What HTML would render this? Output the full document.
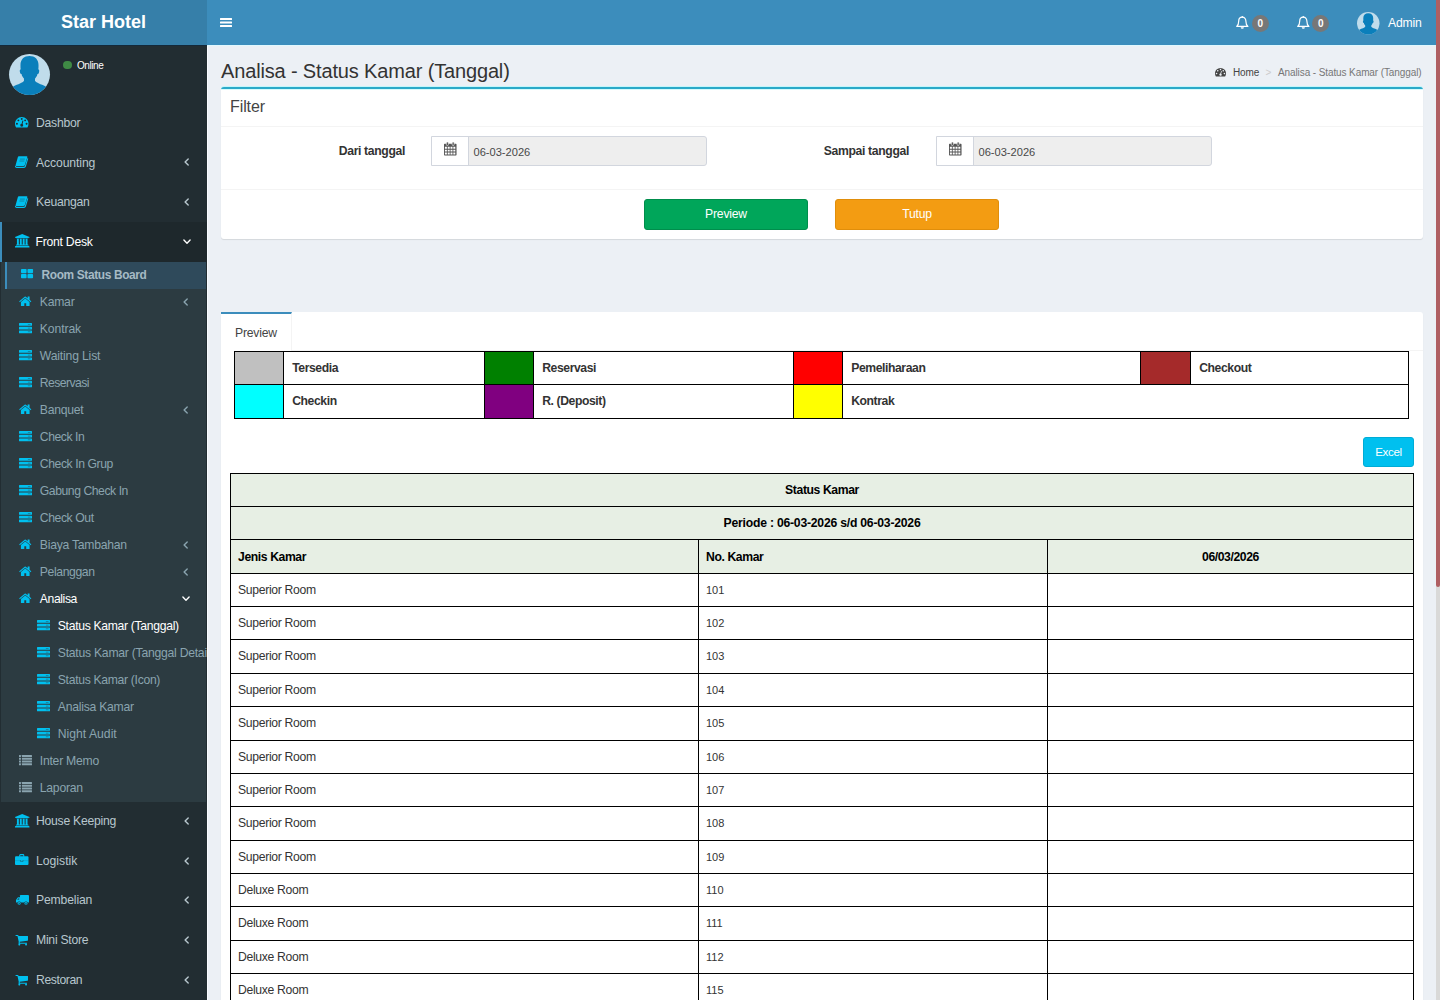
<!DOCTYPE html>
<html lang="id">
<head>
<meta charset="utf-8">
<title>Star Hotel - Analisa - Status Kamar (Tanggal)</title>
<style>
*{box-sizing:border-box}
html,body{margin:0;padding:0}
body{width:1440px;height:1000px;overflow:hidden;background:#ecf0f5;font-family:"Liberation Sans",sans-serif;font-size:11.7px;color:#333;position:relative;line-height:18px}
svg.i{position:absolute;display:block;overflow:visible}
/* ---------- header ---------- */
.hdr{position:absolute;left:0;top:0;width:1436px;height:45px;background:#3c8dbc}
.logo{position:absolute;left:0;top:0;width:207px;height:45px;background:#367fa9;color:#fff;text-align:center;font-weight:bold;font-size:18px;line-height:45px}
.badge{position:absolute;width:17px;height:17px;border-radius:50%;background:#777;color:#fff;font-weight:bold;font-size:10px;line-height:17px;text-align:center}
.admin{position:absolute;left:1388px;top:14px;color:#fff;font-size:12.200px;line-height:18px;letter-spacing:-.2px}
/* ---------- sidebar ---------- */
.side{position:absolute;left:0;top:45px;width:207px;height:955px;background:#222d32;overflow:hidden}
.online{position:absolute;left:63px;top:12.500px;color:#fff;font-size:10px;line-height:16px;white-space:nowrap;letter-spacing:-.4px}
.online b{display:inline-block;width:8.500px;height:8.500px;border-radius:50%;background:#3f8a45;margin-right:5.400px;vertical-align:-.5px}
.mi{position:absolute;left:0;width:207px;height:39.600px;color:#b8c7ce;border-left:3px solid transparent;font-size:12.200px;line-height:18px;white-space:nowrap;letter-spacing:-.25px}
.mi.act{background:#1e282c;color:#fff;border-left:2.500px solid #3c8dbc}
.mi.act .tx{left:33.500px}
.mi .tx{position:absolute;left:33px;top:10.450px}
.subbg{position:absolute;left:1px;width:205px;background:#2c3b41}
.si{position:absolute;left:0;width:207px;height:27px;color:#8aa4af;font-size:12.200px;line-height:18px;white-space:nowrap;letter-spacing:-.25px}
.si .tx{position:absolute;left:39.800px;top:3.700px}
.si.l2 .tx{left:57.800px}
.si.on{color:#fff}
.si.hov{left:4.700px;width:201.300px;background:#2f4a5b;border-left:2.500px solid #3c8dbc;font-weight:bold;color:#a6bac5;font-size:11.900px;letter-spacing:-.35px}
.si.hov .tx{left:34.800px}
/* ---------- content ---------- */
.main{position:absolute;left:207px;top:45px;width:1229px;height:955px;overflow:hidden}
h1.ttl{position:absolute;left:14px;top:13px;margin:0;font-weight:normal;font-size:20px;line-height:26px;color:#333;white-space:nowrap;letter-spacing:-.15px}
.crumb{position:absolute;top:19.500px;font-size:10px;line-height:16px;white-space:nowrap;letter-spacing:-.1px}
.crumb.home{color:#444}
.crumb.sep{color:#ccc}
.crumb.cur{color:#777}
.box{position:absolute;left:14px;width:1202px;background:#fff;border-radius:3px;box-shadow:0 1px 1px rgba(0,0,0,.1)}
.box1{top:42px;height:152px;border-top:2px solid #2aa9c8;box-shadow:0 1px 1px rgba(0,0,0,.1),0 -1px 0 #c4f6fb}
.box1:before{content:"";position:absolute;left:0;right:0;top:0;height:1px;background:#d6fbfd}
.box1 .bt{position:absolute;left:9px;top:7.500px;font-size:16px;line-height:20px;color:#444;letter-spacing:-.1px}
.box1 .l1{position:absolute;left:0;right:0;top:37px;height:1px;background:#f4f4f4}
.box1 .l2{position:absolute;left:0;right:0;top:100px;height:1px;background:#f4f4f4}
.lbl{position:absolute;top:53px;font-weight:bold;font-size:12.200px;line-height:18px;color:#333;text-align:right;white-space:nowrap;letter-spacing:-.35px}
.ig{position:absolute;top:47px;width:276px;height:30px;border:1px solid #d2d6de;background:#eee;border-radius:0 3px 3px 0}
.ig .ad{position:absolute;left:0;top:0;width:36.500px;height:28px;background:#fff;border-right:1px solid #d2d6de}
.ig .v{position:absolute;left:41.500px;top:6.600px;font-size:11.100px;line-height:16px;color:#484848}
.btn{position:absolute;height:31px;border-radius:3px;color:#fff;text-align:center;font-size:12.200px;line-height:29px;letter-spacing:-.2px}
.b-g{background:#00a65a;border:1px solid #008d4c}
.b-o{background:#f39c12;border:1px solid #e08e0b}
.b-c{background:#00c0ef;border:1px solid #00acd6}
.box2{top:267px;height:700px;border-radius:3px 3px 0 0}
.tabline{position:absolute;left:0;right:0;top:38px;height:1px;background:#f4f4f4}
.tab{position:absolute;background:#fff;left:0;top:0;width:71px;height:39px;border-top:2px solid #3c8dbc;border-right:1px solid #f4f4f4;color:#444;font-size:12.200px;line-height:18px;letter-spacing:-.2px}
.tab span{position:absolute;left:14px;top:10px}
table{border-collapse:collapse;table-layout:fixed}
.leg{position:absolute;left:13px;top:39px;width:1175px}
.leg td{border:1px solid #000;padding:0 0 0 8.200px;font-weight:bold;font-size:12.200px;color:#333;letter-spacing:-.42px}
.leg tr+tr td{padding-bottom:2px}
.dt{position:absolute;left:9px;top:161px;width:1184px}
.dt td,.dt th{border:1px solid #000;padding:0 0 1px 7px;font-size:12.200px;color:#333;text-align:left;font-weight:normal;letter-spacing:-.32px}
.dt .h td{background:#e7efe4;font-weight:bold;color:#000;letter-spacing:-.4px;font-size:12.200px}
.dt .h td.w{letter-spacing:-.22px}
.dt .c{text-align:center;padding:0 0 1px 0}
.dt .n{font-size:11px;letter-spacing:0}
.sb{position:absolute;right:0;top:0;width:4px;height:1000px;background:#d9d9d8}
.sb i{position:absolute;left:0;top:0;width:4px;height:587px;background:#af5f62;border-radius:0 0 2px 2px}
.dt tr.h3 td{padding-bottom:0}
.b-c{font-size:11.600px;letter-spacing:-.35px}
.halo1{position:absolute;left:207px;top:45px;width:1229px;height:1px;background:#e0f8fe}
.halo2{position:absolute;left:207px;top:46px;width:1px;height:954px;background:#f8fbff}
.halo3{position:absolute;left:0;top:45px;width:207px;height:1px;background:#14293a}

</style>
</head>
<body>
<div class="hdr">
  <div class="logo"><span>Star Hotel</span></div>
  <svg class="i" style="left:220px;top:17.500px" width="12" height="9" viewBox="0 0 12 9"><path fill="#fff" d="M.5 0h11q.5 0 .5 .5v1q0 .5-.5 .5H.5Q0 2 0 1.500v-1Q0 0 .5 0zm0 3.500h11q.5 0 .5 .5v1q0 .5-.5 .5H.5Q0 5.500 0 5V4q0-.5 .5-.5zm0 3.500h11q.5 0 .5 .5v1q0 .5-.5 .5H.5Q0 9 0 8.500v-1Q0 7 .5 7z"/></svg>
  <svg class="i" style="left:1236.20px;top:15.80px" width="12.60" height="13.00" viewBox="0 0 12.6 13"><path fill="none" stroke="#fff" stroke-width="1.2" stroke-linejoin="round" d="M6.3 1.2c-2.3 0-3.6 1.7-3.6 4 0 2.600-.7 4.100-2 5.200h11.200c-1.300-1.100-2-2.600-2-5.200 0-2.300-1.300-4-3.600-4z"/><path fill="#fff" d="M4.700 11.200h3.200q0 1.500-1.600 1.500t-1.600-1.500z"/><circle cx="6.300" cy=".9" r=".8" fill="#fff"/></svg>
  <div class="badge" style="left:1251.700px;top:14.800px">0</div>
  <svg class="i" style="left:1296.80px;top:15.80px" width="12.60" height="13.00" viewBox="0 0 12.6 13"><path fill="none" stroke="#fff" stroke-width="1.2" stroke-linejoin="round" d="M6.3 1.2c-2.3 0-3.6 1.7-3.6 4 0 2.600-.7 4.100-2 5.200h11.200c-1.300-1.100-2-2.600-2-5.200 0-2.300-1.300-4-3.600-4z"/><path fill="#fff" d="M4.700 11.200h3.200q0 1.500-1.600 1.500t-1.600-1.500z"/><circle cx="6.300" cy=".9" r=".8" fill="#fff"/></svg>
  <div class="badge" style="left:1312.200px;top:14.800px">0</div>
  <svg class="i" style="left:1356.6px;top:11.7px" width="22.5" height="22.5" viewBox="0 0 100 100"><defs><clipPath id="cp22"><circle cx="50" cy="50" r="50"/></clipPath></defs><circle cx="50" cy="50" r="50" fill="#c0dceb"/><g clip-path="url(#cp22)" fill="#0a7fbb"><path d="M50 5c-13 0-22 8-22 22 0 4 0 8 .5 11-2 0-2.500 2-2 5s2 6 4 6c1.500 6 4 9 6 11v6c-3 4-14 8-26 13-4 2-8 6-8 10v15h95V89c0-4-4-8-8-10-12-5-23-9-26-13v-6c2-2 4.500-5 6-11 2 0 3.500-3 4-6s0-5-2-5c.5-3 .5-7 .5-11 0-14-9-22-22-22z"/></g></svg>
  <div class="admin">Admin</div>
</div>
<div class="side">
  <svg class="i" style="left:8.9px;top:8.9px" width="41" height="41" viewBox="0 0 100 100"><defs><clipPath id="cp41"><circle cx="50" cy="50" r="50"/></clipPath></defs><circle cx="50" cy="50" r="50" fill="#c0dceb"/><g clip-path="url(#cp41)" fill="#0a7fbb"><path d="M50 5c-13 0-22 8-22 22 0 4 0 8 .5 11-2 0-2.500 2-2 5s2 6 4 6c1.500 6 4 9 6 11v6c-3 4-14 8-26 13-4 2-8 6-8 10v15h95V89c0-4-4-8-8-10-12-5-23-9-26-13v-6c2-2 4.500-5 6-11 2 0 3.500-3 4-6s0-5-2-5c.5-3 .5-7 .5-11 0-14-9-22-22-22z"/></g></svg>
  <div class="online"><b></b>Online</div>
<div class="mi" style="top:58.5px"><span class="tx">Dashbor</span></div>
<svg class="i" style="left:15.25px;top:72.3px" width="13.5" height="10.6" viewBox="0 256 1792 1408" preserveAspectRatio="none"><path fill="#00c0ef" d="M384 1152q0-53-37.500-90.500t-90.500-37.500-90.500 37.500-37.500 90.500 37.500 90.500 90.500 37.500 90.500-37.500 37.500-90.500zm192-448q0-53-37.500-90.500t-90.500-37.500-90.500 37.500-37.500 90.500 37.500 90.500 90.500 37.500 90.500-37.500 37.500-90.500zm428 481l101-382q6-26-7.500-48.500t-38.500-29.500-48 6.500-30 39.500l-101 382q-60 5-107 43.500t-63 98.500q-20 77 20 146t117 89 146-20 89-117q16-60-6-117t-72-91zm660-33q0-53-37.500-90.500t-90.500-37.500-90.500 37.500-37.500 90.500 37.500 90.500 90.500 37.500 90.500-37.500 37.500-90.500zm-640-640q0-53-37.500-90.500t-90.500-37.500-90.500 37.500-37.500 90.500 37.500 90.500 90.500 37.500 90.500-37.500 37.500-90.500zm448 192q0-53-37.500-90.500t-90.500-37.500-90.500 37.500-37.500 90.500 37.500 90.500 90.500 37.500 90.500-37.500 37.500-90.500zm320 448q0 261-141 483-19 29-54 29h-1402q-35 0-54-29-141-221-141-483 0-182 71-348t191-286 286-191 348-71 348 71 286 191 191 286 71 348z"/></svg>
<div class="mi" style="top:98.1px"><span class="tx" style="letter-spacing:-0.1px">Accounting</span></div>
<svg class="i" style="left:14.85px;top:111.09px" width="13.50" height="12.21" viewBox="0 0 12.6 11.4"><path fill="#00c0ef" d="M3.6 0.2h7.2q1 0 .7 1L9.2 8.4q-.3 .9-1.3 .9H1.2q-.9 0-.6-1L2.7 1q.2-.8 .9-.8z"/><path fill="none" stroke="#00c0ef" stroke-width="1" d="M11.9 2.2L9.7 9.6q-.3 1-1.3 1H1.6q-1.3 0-1.1-1.3"/><path stroke="#222d32" stroke-opacity=".45" stroke-width=".8" d="M4.6 2.9h4.6M4.1 4.7h4.6"/></svg>
<svg class="i" style="left:183.70px;top:113.30px" width="5.50" height="8.00" viewBox="0 0 5.5 8"><path fill="none" stroke="#b8c7ce" stroke-width="1.4" stroke-linecap="round" stroke-linejoin="round" d="M4.2 .9L1.1 4l3.1 3.1"/></svg>
<div class="mi" style="top:137.7px"><span class="tx">Keuangan</span></div>
<svg class="i" style="left:14.85px;top:150.69px" width="13.50" height="12.21" viewBox="0 0 12.6 11.4"><path fill="#00c0ef" d="M3.6 0.2h7.2q1 0 .7 1L9.2 8.4q-.3 .9-1.3 .9H1.2q-.9 0-.6-1L2.7 1q.2-.8 .9-.8z"/><path fill="none" stroke="#00c0ef" stroke-width="1" d="M11.9 2.2L9.7 9.6q-.3 1-1.3 1H1.6q-1.3 0-1.1-1.3"/><path stroke="#222d32" stroke-opacity=".45" stroke-width=".8" d="M4.6 2.9h4.6M4.1 4.7h4.6"/></svg>
<svg class="i" style="left:183.70px;top:152.90px" width="5.50" height="8.00" viewBox="0 0 5.5 8"><path fill="none" stroke="#b8c7ce" stroke-width="1.4" stroke-linecap="round" stroke-linejoin="round" d="M4.2 .9L1.1 4l3.1 3.1"/></svg>
<div class="mi act" style="top:177.3px"><span class="tx">Front Desk</span></div>
<svg class="i" style="left:15.27px;top:189.25px" width="14.46" height="13.5" viewBox="0 0 1920 1792" preserveAspectRatio="none"><path fill="#00c0ef" d="M960 0l960 384v128h-128q0 26-20.500 45t-48.500 19h-1526q-28 0-48.500-19t-20.500-45h-128v-128zm-704 640h256v768h128v-768h256v768h128v-768h256v768h128v-768h256v768h59q28 0 48.500 19t20.500 45v64h-1664v-64q0-26 20.500-45t48.500-19h59v-768zm1595 960q28 0 48.500 19t20.500 45v128h-1920v-128q0-26 20.500-45t48.500-19h1782z"/></svg>
<svg class="i" style="left:183.00px;top:194.40px" width="8.00" height="5.50" viewBox="0 0 8 5.5"><path fill="none" stroke="#fff" stroke-width="1.4" stroke-linecap="round" stroke-linejoin="round" d="M.9 1.1L4 4.2l3.1-3.1"/></svg>
<div class="subbg" style="top:216.9px;height:540px"></div>
<div class="si hov" style="top:216.9px"><span class="tx">Room Status Board</span></div>
<svg class="i" style="left:20.70px;top:224.20px" width="12.07" height="9.29" viewBox="0 0 11.7 9"><rect x="0" y="0" width="5.4" height="4.05" rx=".8" fill="#00c0ef"/><rect x="0" y="4.95" width="5.4" height="4.05" rx=".8" fill="#00c0ef"/><rect x="6.3" y="0" width="5.4" height="4.05" rx=".8" fill="#00c0ef"/><rect x="6.3" y="4.95" width="5.4" height="4.05" rx=".8" fill="#00c0ef"/></svg>
<div class="si" style="top:243.9px"><span class="tx">Kamar</span></div>
<svg class="i" style="left:18.75px;top:251.09999999999997px" width="12.5" height="10.6" viewBox="64 192 1664 1408" preserveAspectRatio="none"><path fill="#00c0ef" d="M1472 992v480q0 26-19 45t-45 19h-384v-384h-256v384h-384q-26 0-45-19t-19-45v-480q0-1 .5-3t.5-3l575-474 575 474q1 2 1 6zm223-69l-62 74q-8 9-21 11h-3q-13 0-21-7l-692-577-692 577q-12 8-24 7-13-2-21-11l-62-74q-8-10-7-23.500t11-21.500l719-599q32-26 76-26t76 26l244 204v-195q0-14 9-23t23-9h192q14 0 23 9t9 23v408l219 182q10 8 11 21.500t-7 23.500z"/></svg>
<svg class="i" style="left:183.20px;top:252.80px" width="5.50" height="8.00" viewBox="0 0 5.5 8"><path fill="none" stroke="#8aa4af" stroke-width="1.4" stroke-linecap="round" stroke-linejoin="round" d="M4.2 .9L1.1 4l3.1 3.1"/></svg>
<div class="si" style="top:270.9px"><span class="tx" style="letter-spacing:-0.1px">Kontrak</span></div>
<svg class="i" style="left:19.00px;top:277.95px" width="13.00" height="10.21" viewBox="0 0 12.6 9.9"><rect x="0" y="0" width="12.6" height="2.7" rx=".5" fill="#00c0ef"/><rect x="8.6" y="1" width="2.6" height=".7" fill="#2c3b41" fill-opacity=".55"/><rect x="0" y="3.6" width="12.6" height="2.7" rx=".5" fill="#00c0ef"/><rect x="8.6" y="4.6" width="2.6" height=".7" fill="#2c3b41" fill-opacity=".55"/><rect x="0" y="7.2" width="12.6" height="2.7" rx=".5" fill="#00c0ef"/><rect x="8.6" y="8.2" width="2.6" height=".7" fill="#2c3b41" fill-opacity=".55"/></svg>
<div class="si" style="top:297.9px"><span class="tx" style="letter-spacing:-0.17px">Waiting List</span></div>
<svg class="i" style="left:19.00px;top:304.95px" width="13.00" height="10.21" viewBox="0 0 12.6 9.9"><rect x="0" y="0" width="12.6" height="2.7" rx=".5" fill="#00c0ef"/><rect x="8.6" y="1" width="2.6" height=".7" fill="#2c3b41" fill-opacity=".55"/><rect x="0" y="3.6" width="12.6" height="2.7" rx=".5" fill="#00c0ef"/><rect x="8.6" y="4.6" width="2.6" height=".7" fill="#2c3b41" fill-opacity=".55"/><rect x="0" y="7.2" width="12.6" height="2.7" rx=".5" fill="#00c0ef"/><rect x="8.6" y="8.2" width="2.6" height=".7" fill="#2c3b41" fill-opacity=".55"/></svg>
<div class="si" style="top:324.9px"><span class="tx" style="letter-spacing:-0.55px">Reservasi</span></div>
<svg class="i" style="left:19.00px;top:331.95px" width="13.00" height="10.21" viewBox="0 0 12.6 9.9"><rect x="0" y="0" width="12.6" height="2.7" rx=".5" fill="#00c0ef"/><rect x="8.6" y="1" width="2.6" height=".7" fill="#2c3b41" fill-opacity=".55"/><rect x="0" y="3.6" width="12.6" height="2.7" rx=".5" fill="#00c0ef"/><rect x="8.6" y="4.6" width="2.6" height=".7" fill="#2c3b41" fill-opacity=".55"/><rect x="0" y="7.2" width="12.6" height="2.7" rx=".5" fill="#00c0ef"/><rect x="8.6" y="8.2" width="2.6" height=".7" fill="#2c3b41" fill-opacity=".55"/></svg>
<div class="si" style="top:351.9px"><span class="tx">Banquet</span></div>
<svg class="i" style="left:18.75px;top:359.09999999999997px" width="12.5" height="10.6" viewBox="64 192 1664 1408" preserveAspectRatio="none"><path fill="#00c0ef" d="M1472 992v480q0 26-19 45t-45 19h-384v-384h-256v384h-384q-26 0-45-19t-19-45v-480q0-1 .5-3t.5-3l575-474 575 474q1 2 1 6zm223-69l-62 74q-8 9-21 11h-3q-13 0-21-7l-692-577-692 577q-12 8-24 7-13-2-21-11l-62-74q-8-10-7-23.500t11-21.500l719-599q32-26 76-26t76 26l244 204v-195q0-14 9-23t23-9h192q14 0 23 9t9 23v408l219 182q10 8 11 21.500t-7 23.500z"/></svg>
<svg class="i" style="left:183.20px;top:360.80px" width="5.50" height="8.00" viewBox="0 0 5.5 8"><path fill="none" stroke="#8aa4af" stroke-width="1.4" stroke-linecap="round" stroke-linejoin="round" d="M4.2 .9L1.1 4l3.1 3.1"/></svg>
<div class="si" style="top:378.9px"><span class="tx" style="letter-spacing:-0.45px">Check In</span></div>
<svg class="i" style="left:19.00px;top:385.95px" width="13.00" height="10.21" viewBox="0 0 12.6 9.9"><rect x="0" y="0" width="12.6" height="2.7" rx=".5" fill="#00c0ef"/><rect x="8.6" y="1" width="2.6" height=".7" fill="#2c3b41" fill-opacity=".55"/><rect x="0" y="3.6" width="12.6" height="2.7" rx=".5" fill="#00c0ef"/><rect x="8.6" y="4.6" width="2.6" height=".7" fill="#2c3b41" fill-opacity=".55"/><rect x="0" y="7.2" width="12.6" height="2.7" rx=".5" fill="#00c0ef"/><rect x="8.6" y="8.2" width="2.6" height=".7" fill="#2c3b41" fill-opacity=".55"/></svg>
<div class="si" style="top:405.9px"><span class="tx" style="letter-spacing:-0.42px">Check In Grup</span></div>
<svg class="i" style="left:19.00px;top:412.95px" width="13.00" height="10.21" viewBox="0 0 12.6 9.9"><rect x="0" y="0" width="12.6" height="2.7" rx=".5" fill="#00c0ef"/><rect x="8.6" y="1" width="2.6" height=".7" fill="#2c3b41" fill-opacity=".55"/><rect x="0" y="3.6" width="12.6" height="2.7" rx=".5" fill="#00c0ef"/><rect x="8.6" y="4.6" width="2.6" height=".7" fill="#2c3b41" fill-opacity=".55"/><rect x="0" y="7.2" width="12.6" height="2.7" rx=".5" fill="#00c0ef"/><rect x="8.6" y="8.2" width="2.6" height=".7" fill="#2c3b41" fill-opacity=".55"/></svg>
<div class="si" style="top:432.9px"><span class="tx" style="letter-spacing:-0.45px">Gabung Check In</span></div>
<svg class="i" style="left:19.00px;top:439.95px" width="13.00" height="10.21" viewBox="0 0 12.6 9.9"><rect x="0" y="0" width="12.6" height="2.7" rx=".5" fill="#00c0ef"/><rect x="8.6" y="1" width="2.6" height=".7" fill="#2c3b41" fill-opacity=".55"/><rect x="0" y="3.6" width="12.6" height="2.7" rx=".5" fill="#00c0ef"/><rect x="8.6" y="4.6" width="2.6" height=".7" fill="#2c3b41" fill-opacity=".55"/><rect x="0" y="7.2" width="12.6" height="2.7" rx=".5" fill="#00c0ef"/><rect x="8.6" y="8.2" width="2.6" height=".7" fill="#2c3b41" fill-opacity=".55"/></svg>
<div class="si" style="top:459.9px"><span class="tx" style="letter-spacing:-0.41px">Check Out</span></div>
<svg class="i" style="left:19.00px;top:466.95px" width="13.00" height="10.21" viewBox="0 0 12.6 9.9"><rect x="0" y="0" width="12.6" height="2.7" rx=".5" fill="#00c0ef"/><rect x="8.6" y="1" width="2.6" height=".7" fill="#2c3b41" fill-opacity=".55"/><rect x="0" y="3.6" width="12.6" height="2.7" rx=".5" fill="#00c0ef"/><rect x="8.6" y="4.6" width="2.6" height=".7" fill="#2c3b41" fill-opacity=".55"/><rect x="0" y="7.2" width="12.6" height="2.7" rx=".5" fill="#00c0ef"/><rect x="8.6" y="8.2" width="2.6" height=".7" fill="#2c3b41" fill-opacity=".55"/></svg>
<div class="si" style="top:486.9px"><span class="tx">Biaya Tambahan</span></div>
<svg class="i" style="left:18.75px;top:494.09999999999997px" width="12.5" height="10.6" viewBox="64 192 1664 1408" preserveAspectRatio="none"><path fill="#00c0ef" d="M1472 992v480q0 26-19 45t-45 19h-384v-384h-256v384h-384q-26 0-45-19t-19-45v-480q0-1 .5-3t.5-3l575-474 575 474q1 2 1 6zm223-69l-62 74q-8 9-21 11h-3q-13 0-21-7l-692-577-692 577q-12 8-24 7-13-2-21-11l-62-74q-8-10-7-23.500t11-21.500l719-599q32-26 76-26t76 26l244 204v-195q0-14 9-23t23-9h192q14 0 23 9t9 23v408l219 182q10 8 11 21.500t-7 23.500z"/></svg>
<svg class="i" style="left:183.20px;top:495.80px" width="5.50" height="8.00" viewBox="0 0 5.5 8"><path fill="none" stroke="#8aa4af" stroke-width="1.4" stroke-linecap="round" stroke-linejoin="round" d="M4.2 .9L1.1 4l3.1 3.1"/></svg>
<div class="si" style="top:513.9px"><span class="tx" style="letter-spacing:-0.39px">Pelanggan</span></div>
<svg class="i" style="left:18.75px;top:521.1px" width="12.5" height="10.6" viewBox="64 192 1664 1408" preserveAspectRatio="none"><path fill="#00c0ef" d="M1472 992v480q0 26-19 45t-45 19h-384v-384h-256v384h-384q-26 0-45-19t-19-45v-480q0-1 .5-3t.5-3l575-474 575 474q1 2 1 6zm223-69l-62 74q-8 9-21 11h-3q-13 0-21-7l-692-577-692 577q-12 8-24 7-13-2-21-11l-62-74q-8-10-7-23.500t11-21.500l719-599q32-26 76-26t76 26l244 204v-195q0-14 9-23t23-9h192q14 0 23 9t9 23v408l219 182q10 8 11 21.500t-7 23.500z"/></svg>
<svg class="i" style="left:183.20px;top:522.80px" width="5.50" height="8.00" viewBox="0 0 5.5 8"><path fill="none" stroke="#8aa4af" stroke-width="1.4" stroke-linecap="round" stroke-linejoin="round" d="M4.2 .9L1.1 4l3.1 3.1"/></svg>
<div class="si on" style="top:540.9px"><span class="tx" style="letter-spacing:-0.4px">Analisa</span></div>
<svg class="i" style="left:18.75px;top:548.1px" width="12.5" height="10.6" viewBox="64 192 1664 1408" preserveAspectRatio="none"><path fill="#00c0ef" d="M1472 992v480q0 26-19 45t-45 19h-384v-384h-256v384h-384q-26 0-45-19t-19-45v-480q0-1 .5-3t.5-3l575-474 575 474q1 2 1 6zm223-69l-62 74q-8 9-21 11h-3q-13 0-21-7l-692-577-692 577q-12 8-24 7-13-2-21-11l-62-74q-8-10-7-23.500t11-21.500l719-599q32-26 76-26t76 26l244 204v-195q0-14 9-23t23-9h192q14 0 23 9t9 23v408l219 182q10 8 11 21.500t-7 23.500z"/></svg>
<svg class="i" style="left:182.00px;top:550.90px" width="8.00" height="5.50" viewBox="0 0 8 5.5"><path fill="none" stroke="#fff" stroke-width="1.4" stroke-linecap="round" stroke-linejoin="round" d="M.9 1.1L4 4.2l3.1-3.1"/></svg>
<div class="si l2 on" style="top:567.9px"><span class="tx" style="letter-spacing:-0.32px">Status Kamar (Tanggal)</span></div>
<svg class="i" style="left:37.00px;top:574.95px" width="13.00" height="10.21" viewBox="0 0 12.6 9.9"><rect x="0" y="0" width="12.6" height="2.7" rx=".5" fill="#00c0ef"/><rect x="8.6" y="1" width="2.6" height=".7" fill="#2c3b41" fill-opacity=".55"/><rect x="0" y="3.6" width="12.6" height="2.7" rx=".5" fill="#00c0ef"/><rect x="8.6" y="4.6" width="2.6" height=".7" fill="#2c3b41" fill-opacity=".55"/><rect x="0" y="7.2" width="12.6" height="2.7" rx=".5" fill="#00c0ef"/><rect x="8.6" y="8.2" width="2.6" height=".7" fill="#2c3b41" fill-opacity=".55"/></svg>
<div class="si l2" style="top:594.9px"><span class="tx">Status Kamar (Tanggal Detail)</span></div>
<svg class="i" style="left:37.00px;top:601.95px" width="13.00" height="10.21" viewBox="0 0 12.6 9.9"><rect x="0" y="0" width="12.6" height="2.7" rx=".5" fill="#00c0ef"/><rect x="8.6" y="1" width="2.6" height=".7" fill="#2c3b41" fill-opacity=".55"/><rect x="0" y="3.6" width="12.6" height="2.7" rx=".5" fill="#00c0ef"/><rect x="8.6" y="4.6" width="2.6" height=".7" fill="#2c3b41" fill-opacity=".55"/><rect x="0" y="7.2" width="12.6" height="2.7" rx=".5" fill="#00c0ef"/><rect x="8.6" y="8.2" width="2.6" height=".7" fill="#2c3b41" fill-opacity=".55"/></svg>
<div class="si l2" style="top:621.9px"><span class="tx" style="letter-spacing:-0.32px">Status Kamar (Icon)</span></div>
<svg class="i" style="left:37.00px;top:628.95px" width="13.00" height="10.21" viewBox="0 0 12.6 9.9"><rect x="0" y="0" width="12.6" height="2.7" rx=".5" fill="#00c0ef"/><rect x="8.6" y="1" width="2.6" height=".7" fill="#2c3b41" fill-opacity=".55"/><rect x="0" y="3.6" width="12.6" height="2.7" rx=".5" fill="#00c0ef"/><rect x="8.6" y="4.6" width="2.6" height=".7" fill="#2c3b41" fill-opacity=".55"/><rect x="0" y="7.2" width="12.6" height="2.7" rx=".5" fill="#00c0ef"/><rect x="8.6" y="8.2" width="2.6" height=".7" fill="#2c3b41" fill-opacity=".55"/></svg>
<div class="si l2" style="top:648.9px"><span class="tx">Analisa Kamar</span></div>
<svg class="i" style="left:37.00px;top:655.95px" width="13.00" height="10.21" viewBox="0 0 12.6 9.9"><rect x="0" y="0" width="12.6" height="2.7" rx=".5" fill="#00c0ef"/><rect x="8.6" y="1" width="2.6" height=".7" fill="#2c3b41" fill-opacity=".55"/><rect x="0" y="3.6" width="12.6" height="2.7" rx=".5" fill="#00c0ef"/><rect x="8.6" y="4.6" width="2.6" height=".7" fill="#2c3b41" fill-opacity=".55"/><rect x="0" y="7.2" width="12.6" height="2.7" rx=".5" fill="#00c0ef"/><rect x="8.6" y="8.2" width="2.6" height=".7" fill="#2c3b41" fill-opacity=".55"/></svg>
<div class="si l2" style="top:675.9px"><span class="tx" style="letter-spacing:0px">Night Audit</span></div>
<svg class="i" style="left:37.00px;top:682.95px" width="13.00" height="10.21" viewBox="0 0 12.6 9.9"><rect x="0" y="0" width="12.6" height="2.7" rx=".5" fill="#00c0ef"/><rect x="8.6" y="1" width="2.6" height=".7" fill="#2c3b41" fill-opacity=".55"/><rect x="0" y="3.6" width="12.6" height="2.7" rx=".5" fill="#00c0ef"/><rect x="8.6" y="4.6" width="2.6" height=".7" fill="#2c3b41" fill-opacity=".55"/><rect x="0" y="7.2" width="12.6" height="2.7" rx=".5" fill="#00c0ef"/><rect x="8.6" y="8.2" width="2.6" height=".7" fill="#2c3b41" fill-opacity=".55"/></svg>
<div class="si" style="top:702.9px"><span class="tx">Inter Memo</span></div>
<svg class="i" style="left:18.75px;top:710.30px" width="13.50" height="10.61" viewBox="0 0 12.6 9.9"><rect x="0" y="0" width="1.8" height="1.75" rx=".2" fill="#8aa4af"/><rect x="2.7" y="0" width="9.4" height="1.75" rx=".2" fill="#8aa4af"/><rect x="0" y="2.6" width="1.8" height="1.75" rx=".2" fill="#8aa4af"/><rect x="2.7" y="2.6" width="9.4" height="1.75" rx=".2" fill="#8aa4af"/><rect x="0" y="5.2" width="1.8" height="1.75" rx=".2" fill="#8aa4af"/><rect x="2.7" y="5.2" width="9.4" height="1.75" rx=".2" fill="#8aa4af"/><rect x="0" y="7.8" width="1.8" height="1.75" rx=".2" fill="#8aa4af"/><rect x="2.7" y="7.8" width="9.4" height="1.75" rx=".2" fill="#8aa4af"/></svg>
<div class="si" style="top:729.9px"><span class="tx">Laporan</span></div>
<svg class="i" style="left:18.75px;top:737.30px" width="13.50" height="10.61" viewBox="0 0 12.6 9.9"><rect x="0" y="0" width="1.8" height="1.75" rx=".2" fill="#8aa4af"/><rect x="2.7" y="0" width="9.4" height="1.75" rx=".2" fill="#8aa4af"/><rect x="0" y="2.6" width="1.8" height="1.75" rx=".2" fill="#8aa4af"/><rect x="2.7" y="2.6" width="9.4" height="1.75" rx=".2" fill="#8aa4af"/><rect x="0" y="5.2" width="1.8" height="1.75" rx=".2" fill="#8aa4af"/><rect x="2.7" y="5.2" width="9.4" height="1.75" rx=".2" fill="#8aa4af"/><rect x="0" y="7.8" width="1.8" height="1.75" rx=".2" fill="#8aa4af"/><rect x="2.7" y="7.8" width="9.4" height="1.75" rx=".2" fill="#8aa4af"/></svg>
<div class="mi" style="top:756.9px"><span class="tx">House Keeping</span></div>
<svg class="i" style="left:15.27px;top:768.8499999999999px" width="14.46" height="13.5" viewBox="0 0 1920 1792" preserveAspectRatio="none"><path fill="#00c0ef" d="M960 0l960 384v128h-128q0 26-20.500 45t-48.500 19h-1526q-28 0-48.500-19t-20.500-45h-128v-128zm-704 640h256v768h128v-768h256v768h128v-768h256v768h128v-768h256v768h59q28 0 48.500 19t20.500 45v64h-1664v-64q0-26 20.500-45t48.500-19h59v-768zm1595 960q28 0 48.500 19t20.500 45v128h-1920v-128q0-26 20.500-45t48.500-19h1782z"/></svg>
<svg class="i" style="left:183.70px;top:772.10px" width="5.50" height="8.00" viewBox="0 0 5.5 8"><path fill="none" stroke="#b8c7ce" stroke-width="1.4" stroke-linecap="round" stroke-linejoin="round" d="M4.2 .9L1.1 4l3.1 3.1"/></svg>
<div class="mi" style="top:796.5px"><span class="tx" style="letter-spacing:0px">Logistik</span></div>
<svg class="i" style="left:15.25px;top:808.93px" width="13.50" height="11.14" viewBox="0 0 12.6 10.4"><path fill="none" stroke="#00c0ef" stroke-width="1" d="M4.4 2.6V1.3q0-.7 .7-.7h2.4q.7 0 .7 .7v1.3"/><rect x="0" y="2.2" width="12.6" height="8.1" rx="1" fill="#00c0ef"/><path stroke="#222d32" stroke-opacity=".22" stroke-width=".6" fill="none" d="M0 6.2h4.9M7.7 6.2h4.9"/><path stroke="#222d32" stroke-opacity=".55" stroke-width=".7" fill="none" d="M5.1 5.7v1.2h2.4V5.7"/></svg>
<svg class="i" style="left:183.70px;top:811.70px" width="5.50" height="8.00" viewBox="0 0 5.5 8"><path fill="none" stroke="#b8c7ce" stroke-width="1.4" stroke-linecap="round" stroke-linejoin="round" d="M4.2 .9L1.1 4l3.1 3.1"/></svg>
<div class="mi" style="top:835.8px"><span class="tx" style="letter-spacing:-0.15px">Pembelian</span></div>
<svg class="i" style="left:16.30px;top:849.95px" width="13.20" height="10.20" viewBox="0 0 13.2 10.2"><rect x="4" y="0" width="9" height="7.6" rx=".5" fill="#00c0ef"/><path fill="#00c0ef" d="M4 2.3H2.3q-.5 0-.8 .4L.3 4.4q-.3 .4-.3 .9v2.3h4z"/><path fill="#222d32" fill-opacity=".55" d="M3.2 3.1H2.4L1.2 4.7v.4h2z"/><circle cx="3.2" cy="8.3" r="1.7" fill="#00c0ef" stroke="#222d32" stroke-width=".5"/><circle cx="10" cy="8.3" r="1.7" fill="#00c0ef" stroke="#222d32" stroke-width=".5"/><circle cx="3.2" cy="8.3" r=".6" fill="#222d32"/><circle cx="10" cy="8.3" r=".6" fill="#222d32"/></svg>
<svg class="i" style="left:183.70px;top:851.30px" width="5.50" height="8.00" viewBox="0 0 5.5 8"><path fill="none" stroke="#b8c7ce" stroke-width="1.4" stroke-linecap="round" stroke-linejoin="round" d="M4.2 .9L1.1 4l3.1 3.1"/></svg>
<div class="mi" style="top:875.7px"><span class="tx">Mini Store</span></div>
<svg class="i" style="left:15.149999999999999px;top:889.0px" width="12.5" height="11.6" viewBox="0 128 1664 1536" preserveAspectRatio="none"><path fill="#00c0ef" d="M704 1536q0 52-38 90t-90 38-90-38-38-90 38-90 90-38 90 38 38 90zm896 0q0 52-38 90t-90 38-90-38-38-90 38-90 90-38 90 38 38 90zm128-1088v512q0 24-16.500 42.500t-40.500 21.500l-1044 122q13 60 13 70 0 16-24 64h920q26 0 45 19t19 45-19 45-45 19h-1024q-26 0-45-19t-19-45q0-11 8-31.500t16-36 21.500-40 15.500-29.500l-177-823h-204q-26 0-45-19t-19-45 19-45 45-19h256q16 0 28.500 6.500t19.500 15.500 13 24.500 8 26 5.500 29.500 4.500 26h1201q26 0 45 19t19 45z"/></svg>
<svg class="i" style="left:183.70px;top:890.90px" width="5.50" height="8.00" viewBox="0 0 5.5 8"><path fill="none" stroke="#b8c7ce" stroke-width="1.4" stroke-linecap="round" stroke-linejoin="round" d="M4.2 .9L1.1 4l3.1 3.1"/></svg>
<div class="mi" style="top:915.3px"><span class="tx" style="letter-spacing:-0.4px">Restoran</span></div>
<svg class="i" style="left:15.149999999999999px;top:928.6px" width="12.5" height="11.6" viewBox="0 128 1664 1536" preserveAspectRatio="none"><path fill="#00c0ef" d="M704 1536q0 52-38 90t-90 38-90-38-38-90 38-90 90-38 90 38 38 90zm896 0q0 52-38 90t-90 38-90-38-38-90 38-90 90-38 90 38 38 90zm128-1088v512q0 24-16.500 42.500t-40.500 21.500l-1044 122q13 60 13 70 0 16-24 64h920q26 0 45 19t19 45-19 45-45 19h-1024q-26 0-45-19t-19-45q0-11 8-31.500t16-36 21.500-40 15.500-29.500l-177-823h-204q-26 0-45-19t-19-45 19-45 45-19h256q16 0 28.500 6.500t19.500 15.500 13 24.500 8 26 5.500 29.500 4.500 26h1201q26 0 45 19t19 45z"/></svg>
<svg class="i" style="left:183.70px;top:930.50px" width="5.50" height="8.00" viewBox="0 0 5.5 8"><path fill="none" stroke="#b8c7ce" stroke-width="1.4" stroke-linecap="round" stroke-linejoin="round" d="M4.2 .9L1.1 4l3.1 3.1"/></svg>
</div>
<div class="main" id="main">
  <h1 class="ttl">Analisa - Status Kamar (Tanggal)</h1>
  <svg class="i" style="left:1008.2px;top:23px" width="11" height="8.6" viewBox="0 256 1792 1408" preserveAspectRatio="none"><path fill="#444" d="M384 1152q0-53-37.500-90.500t-90.500-37.500-90.500 37.500-37.500 90.500 37.500 90.500 90.500 37.500 90.500-37.500 37.500-90.500zm192-448q0-53-37.500-90.500t-90.500-37.500-90.500 37.500-37.500 90.500 37.500 90.500 90.500 37.500 90.500-37.500 37.500-90.500zm428 481l101-382q6-26-7.500-48.500t-38.500-29.500-48 6.500-30 39.500l-101 382q-60 5-107 43.500t-63 98.500q-20 77 20 146t117 89 146-20 89-117q16-60-6-117t-72-91zm660-33q0-53-37.500-90.500t-90.500-37.500-90.500 37.500-37.500 90.500 37.500 90.500 90.500 37.500 90.500-37.500 37.500-90.500zm-640-640q0-53-37.500-90.500t-90.500-37.500-90.500 37.500-37.500 90.500 37.500 90.500 90.500 37.500 90.500-37.500 37.500-90.500zm448 192q0-53-37.500-90.500t-90.500-37.500-90.500 37.500-37.500 90.500 37.500 90.500 90.500 37.500 90.500-37.500 37.500-90.500zm320 448q0 261-141 483-19 29-54 29h-1402q-35 0-54-29-141-221-141-483 0-182 71-348t191-286 286-191 348-71 348 71 286 191 191 286 71 348z"/></svg>
  <div class="crumb home" style="left:1026px">Home</div>
  <div class="crumb sep" style="left:1058.500px">&gt;</div>
  <div class="crumb cur" style="left:1071px">Analisa - Status Kamar (Tanggal)</div>
  <div class="box box1">
    <div class="bt">Filter</div>
    <div class="l1"></div><div class="l2"></div>
    <div class="lbl" style="right:1018px">Dari tanggal</div>
    <div class="ig" style="left:210px"><div class="ad"></div><svg class="i" style="left:11.90px;top:5.10px" width="12.54" height="13.50" viewBox="0 0 11.7 12.6"><path fill="#555" fill-rule="evenodd" d="M.6 1.700h10.500q.6 0 .6 .6v9.700q0 .6-.6 .6H.6q-.6 0-.6-.6V2.300q0-.6 .6-.6zM0.85 4.50v1.85h1.85v-1.85zM3.47 4.50v1.85h1.85v-1.85zM6.09 4.50v1.85h1.85v-1.85zM8.71 4.50v1.85h1.85v-1.85zM0.85 7.12v1.85h1.85v-1.85zM3.47 7.12v1.85h1.85v-1.85zM6.09 7.12v1.85h1.85v-1.85zM8.71 7.12v1.85h1.85v-1.85zM0.85 9.74v1.85h1.85v-1.85zM3.47 9.74v1.85h1.85v-1.85zM6.09 9.74v1.85h1.85v-1.85zM8.71 9.74v1.85h1.85v-1.85z"/><rect x="2.200" y="0" width="1.900" height="3.300" rx=".9" fill="#555" stroke="#fff" stroke-width=".55"/><rect x="7.600" y="0" width="1.900" height="3.300" rx=".9" fill="#555" stroke="#fff" stroke-width=".55"/></svg><div class="v">06-03-2026</div></div>
    <div class="lbl" style="right:514px">Sampai tanggal</div>
    <div class="ig" style="left:715px"><div class="ad"></div><svg class="i" style="left:11.90px;top:5.10px" width="12.54" height="13.50" viewBox="0 0 11.7 12.6"><path fill="#555" fill-rule="evenodd" d="M.6 1.700h10.500q.6 0 .6 .6v9.700q0 .6-.6 .6H.6q-.6 0-.6-.6V2.300q0-.6 .6-.6zM0.85 4.50v1.85h1.85v-1.85zM3.47 4.50v1.85h1.85v-1.85zM6.09 4.50v1.85h1.85v-1.85zM8.71 4.50v1.85h1.85v-1.85zM0.85 7.12v1.85h1.85v-1.85zM3.47 7.12v1.85h1.85v-1.85zM6.09 7.12v1.85h1.85v-1.85zM8.71 7.12v1.85h1.85v-1.85zM0.85 9.74v1.85h1.85v-1.85zM3.47 9.74v1.85h1.85v-1.85zM6.09 9.74v1.85h1.85v-1.85zM8.71 9.74v1.85h1.85v-1.85z"/><rect x="2.200" y="0" width="1.900" height="3.300" rx=".9" fill="#555" stroke="#fff" stroke-width=".55"/><rect x="7.600" y="0" width="1.900" height="3.300" rx=".9" fill="#555" stroke="#fff" stroke-width=".55"/></svg><div class="v">06-03-2026</div></div>
    <div class="btn b-g" style="left:423px;top:110px;width:164px">Preview</div>
    <div class="btn b-o" style="left:614px;top:110px;width:164px">Tutup</div>
  </div>
  <div class="box box2">
    <div class="tabline"></div>
    <div class="tab"><span>Preview</span></div>
    <table class="leg">
      <colgroup><col style="width:49px"><col style="width:201px"><col style="width:49px"><col style="width:260px"><col style="width:49px"><col style="width:298px"><col style="width:50px"><col></colgroup>
      <tr style="height:33px"><td style="background:#c0c0c0"></td><td>Tersedia</td><td style="background:#008000"></td><td>Reservasi</td><td style="background:#ff0000"></td><td>Pemeliharaan</td><td style="background:#a52a2a"></td><td>Checkout</td></tr>
      <tr style="height:34px"><td style="background:#00ffff"></td><td>Checkin</td><td style="background:#800080"></td><td>R. (Deposit)</td><td style="background:#ffff00"></td><td colspan="3">Kontrak</td></tr>
    </table>
    <div class="btn b-c" style="left:1142px;top:125px;width:51px;height:30px;line-height:28px">Excel</div>
    <table class="dt">
      <colgroup><col style="width:468px"><col style="width:349px"><col></colgroup>
      <tr class="h" style="height:33px"><td colspan="3" class="c">Status Kamar</td></tr>
      <tr class="h" style="height:33px"><td colspan="3" class="c w">Periode : 06-03-2026 s/d 06-03-2026</td></tr>
      <tr class="h h3" style="height:34px"><td>Jenis Kamar</td><td>No. Kamar</td><td class="c">06/03/2026</td></tr>
      <tr style="height:33px"><td>Superior Room</td><td class="n">101</td><td></td></tr>
      <tr style="height:33px"><td>Superior Room</td><td class="n">102</td><td></td></tr>
      <tr style="height:34px"><td>Superior Room</td><td class="n">103</td><td></td></tr>
      <tr style="height:33px"><td>Superior Room</td><td class="n">104</td><td></td></tr>
      <tr style="height:34px"><td>Superior Room</td><td class="n">105</td><td></td></tr>
      <tr style="height:33px"><td>Superior Room</td><td class="n">106</td><td></td></tr>
      <tr style="height:33px"><td>Superior Room</td><td class="n">107</td><td></td></tr>
      <tr style="height:34px"><td>Superior Room</td><td class="n">108</td><td></td></tr>
      <tr style="height:33px"><td>Superior Room</td><td class="n">109</td><td></td></tr>
      <tr style="height:33px"><td>Deluxe Room</td><td class="n">110</td><td></td></tr>
      <tr style="height:34px"><td>Deluxe Room</td><td class="n">111</td><td></td></tr>
      <tr style="height:33px"><td>Deluxe Room</td><td class="n">112</td><td></td></tr>
      <tr style="height:33px"><td>Deluxe Room</td><td class="n">115</td><td></td></tr>
    </table>
  </div>
</div>
<div class="halo1"></div><div class="halo2"></div><div class="halo3"></div>
<div class="sb"><i></i></div>
</body>
</html>
